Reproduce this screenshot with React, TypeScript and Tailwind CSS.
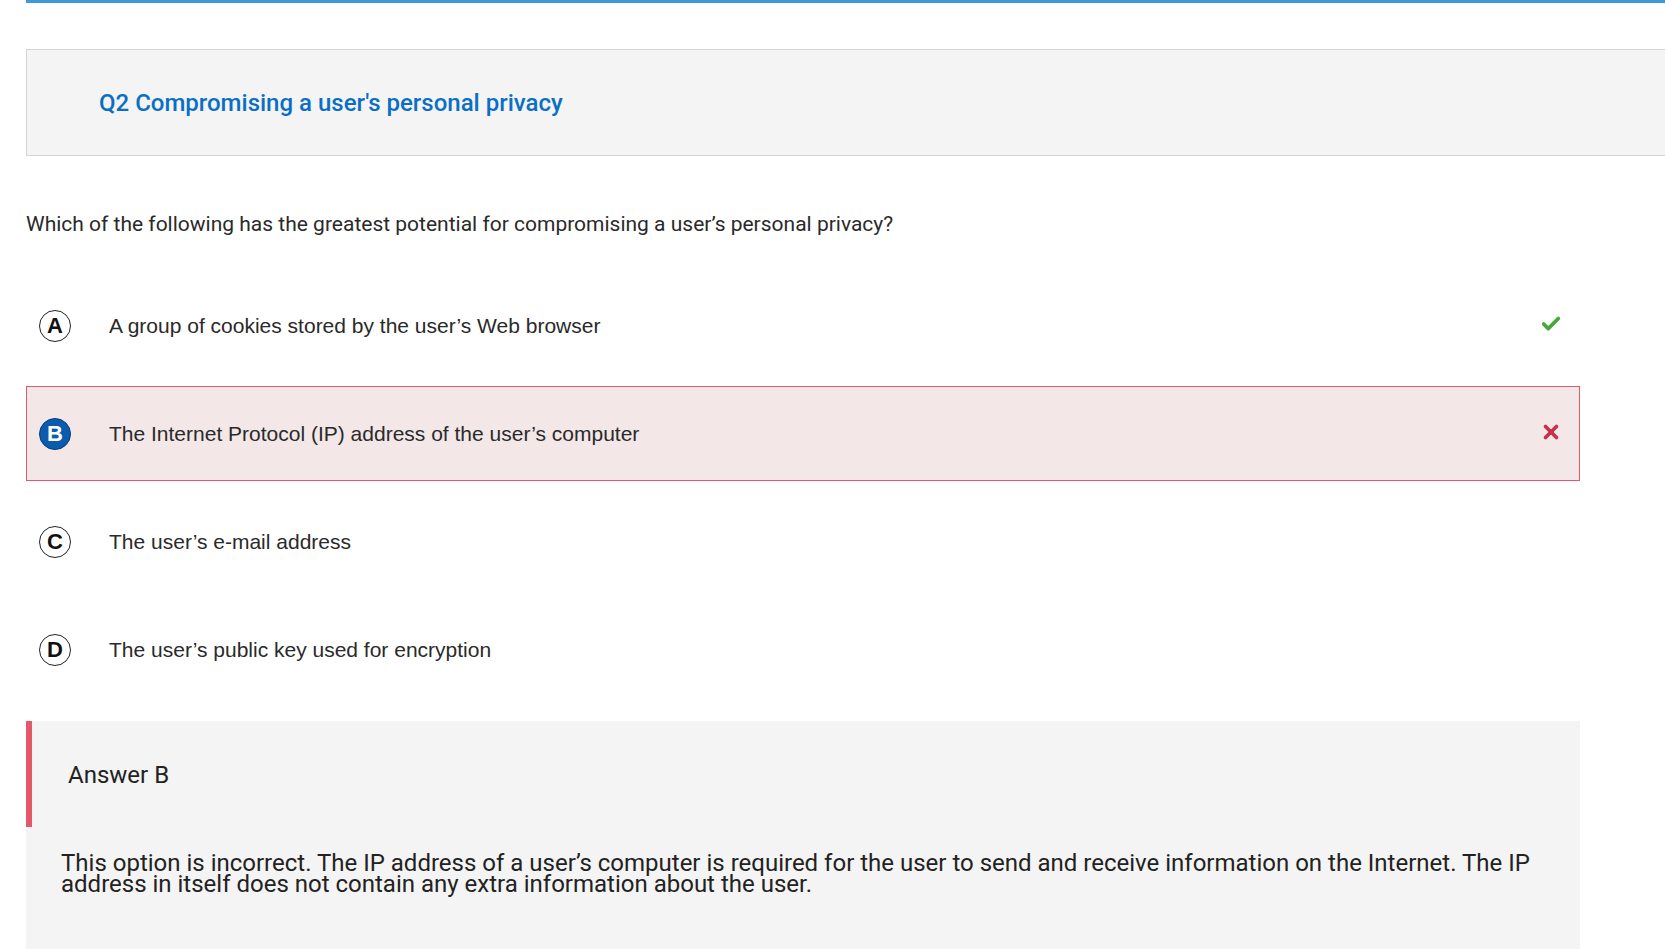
import { Check, X } from "lucide-react";

const options = [
  { letter: "A", text: "A group of cookies stored by the user\u2019s Web browser", mark: "check" },
  { letter: "B", text: "The Internet Protocol (IP) address of the user\u2019s computer", mark: "cross", selected: true },
  { letter: "C", text: "The user\u2019s e-mail address" },
  { letter: "D", text: "The user\u2019s public key used for encryption" },
];

function Letter({ letter, filled }: { letter: string; filled?: boolean }) {
  return filled ? (
    <div className="flex size-[32px] items-center justify-center rounded-full border-[1.5px] border-[#0b3f7a] bg-[#0b5cad] text-[22px] font-bold text-white [font-family:'Liberation_Sans',Arial,sans-serif]">
      {letter}
    </div>
  ) : (
    <div className="flex size-[32px] items-center justify-center rounded-full border-[1.5px] border-[#222] bg-white text-[22px] font-bold text-[#111] [font-family:'Liberation_Sans',Arial,sans-serif]">
      {letter}
    </div>
  );
}

export default function App() {
  return (
    <div className="min-h-[949px] overflow-hidden bg-white pl-[26px] [font-family:Roboto,'Liberation_Sans',sans-serif]">
      <div className="h-[3px] bg-[#3d9ad6]" />

      <div className="mt-[46px] flex h-[107px] items-center border border-r-0 border-[#d6d6d6] bg-[#f4f4f4] pl-[72px]">
        <h2 className="text-[24px] font-medium text-[#0a6fc4]">
          Q2 Compromising a user's personal privacy
        </h2>
      </div>

      <p className="mt-[54px] text-[21px] leading-[28px] text-[#2a2a2a]">
        Which of the following has the greatest potential for compromising a user&rsquo;s personal privacy?
      </p>

      <div className="mt-[40px] flex w-[1554px] flex-col gap-[13px]">
        {options.map((o) => (
          <div
            key={o.letter}
            className={`flex h-[95px] items-center pl-[12px] pr-[17px] ${
              o.selected ? "border border-[#e3596b] bg-[#f3e7e7]" : "border border-transparent"
            }`}
          >
            <Letter letter={o.letter} filled={o.selected} />
            <span className="ml-[38px] flex-1 text-[21px] text-[#2a2a2a] [font-family:'Liberation_Sans',Arial,sans-serif]">
              {o.text}
            </span>
            {o.mark === "check" && <Check className="mb-[3px] size-[22px] text-[#46a83a]" strokeWidth={4} />}
            {o.mark === "cross" && <X className="mb-[3px] size-[22px] text-[#c9304a]" strokeWidth={4} />}
          </div>
        ))}
      </div>

      <div className="mt-[24px] w-[1554px] bg-[#f4f4f4] pb-[60px]">
        <div className="flex h-[106px] items-center border-l-[6px] border-[#e3596b] pl-[36px]">
          <span className="mt-[2px] text-[24px] text-[#222]">Answer B</span>
        </div>
        <p className="mt-[26px] pl-[35px] pr-[40px] text-[24px] leading-[21px] text-[#222]">
          This option is incorrect. The IP address of a user&rsquo;s computer is required for the user to send and receive information on the Internet. The IP address in itself does not contain any extra information about the user.
        </p>
      </div>
    </div>
  );
}
